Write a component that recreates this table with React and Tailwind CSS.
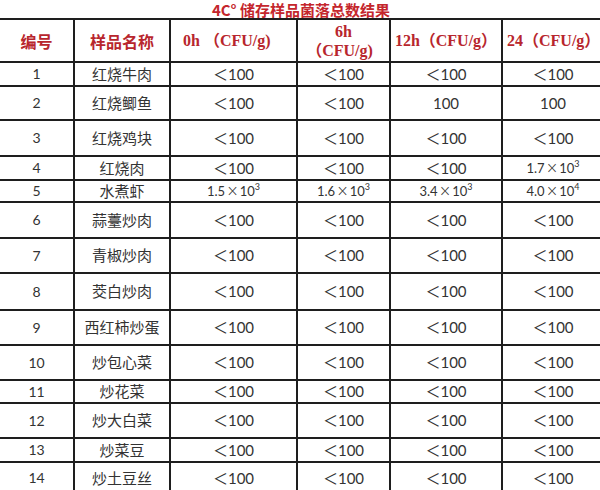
import React from "react";

const rows = [
  ["1", "红烧牛肉", ["＜100"], ["＜100"], ["＜100"], ["＜100"]],
  ["2", "红烧鲫鱼", ["＜100"], ["＜100"], ["100"], ["100"]],
  ["3", "红烧鸡块", ["＜100"], ["＜100"], ["＜100"], ["＜100"]],
  ["4", "红烧肉", ["＜100"], ["＜100"], ["＜100"], ["1.7", "3"]],
  ["5", "水煮虾", ["1.5", "3"], ["1.6", "3"], ["3.4", "3"], ["4.0", "4"]],
  ["6", "蒜薹炒肉", ["＜100"], ["＜100"], ["＜100"], ["＜100"]],
  ["7", "青椒炒肉", ["＜100"], ["＜100"], ["＜100"], ["＜100"]],
  ["8", "茭白炒肉", ["＜100"], ["＜100"], ["＜100"], ["＜100"]],
  ["9", "西红柿炒蛋", ["＜100"], ["＜100"], ["＜100"], ["＜100"]],
  ["10", "炒包心菜", ["＜100"], ["＜100"], ["＜100"], ["＜100"]],
  ["11", "炒花菜", ["＜100"], ["＜100"], ["＜100"], ["＜100"]],
  ["12", "炒大白菜", ["＜100"], ["＜100"], ["＜100"], ["＜100"]],
  ["13", "炒菜豆", ["＜100"], ["＜100"], ["＜100"], ["＜100"]],
  ["14", "炒土豆丝", ["＜100"], ["＜100"], ["＜100"], ["＜100"]],
];

const NUM = "font-['Lato','Open_Sans','Noto_Sans_CJK_SC',sans-serif]";
const CJK = "font-['Noto_Sans_CJK_SC',sans-serif]";
const HEAD = "font-['Liberation_Serif','Noto_Sans_CJK_SC',serif] text-[16px] font-bold text-[#b8262d]";

function Val({ v }) {
  if (v.length === 2) {
    return (
      <span className={"text-[13px] text-[#333] " + NUM}>
        {v[0]}
        <span className="font-['DejaVu_Sans',sans-serif] text-[15px] font-light leading-none px-[1px]">×</span>10
        <sup className="text-[9px] relative -top-[6px]">{v[1]}</sup>
      </span>
    );
  }
  return <span className={"text-[15px] text-[#333] " + NUM}>{v[0]}</span>;
}

function Cell({ children, className = "" }) {
  return (
    <div className={"bg-white flex items-center justify-center text-center leading-tight " + className}>
      {children}
    </div>
  );
}

export default function App() {
  return (
    <div className="w-[600px] h-[490px] overflow-hidden bg-white">
      <div
        className={
          "h-[18px] pt-[1px] flex items-center justify-center text-[15px] font-bold text-[#c4262c] leading-[17px] pl-[2px] " +
          CJK
        }
      >
        4C° 储存样品菌落总数结果
      </div>
      <div className="w-[613px] bg-[#1e1e1e] pt-[2px] grid gap-[2px] grid-cols-[73px_94px_125px_91px_110px_112px] grid-rows-[41px_22px_32px_34px_22px_20px_34px_33px_35px_33px_33px_21px_33px_22px_30px]">
        <Cell>
          <span className={"text-[16px] font-bold text-[#b8262d] " + CJK}>编号</span>
        </Cell>
        <Cell>
          <span className={"text-[16px] font-bold text-[#b8262d] " + CJK}>样品名称</span>
        </Cell>
        <Cell className="justify-start pl-[12px]">
          <span className={HEAD}>0h （CFU/g)</span>
        </Cell>
        <Cell className="flex-col">
          <span className={HEAD + " leading-[19px]"}>6h</span>
          <span className={HEAD + " leading-[19px] pr-[8px]"}>（CFU/g)</span>
        </Cell>
        <Cell>
          <span className={HEAD}>12h（CFU/g）</span>
        </Cell>
        <Cell className="justify-start pl-[4px]">
          <span className={HEAD}>24（CFU/g）</span>
        </Cell>
        {rows.map((r) => (
          <React.Fragment key={r[0]}>
            <Cell>
              <span className={"text-[14px] text-[#333] " + NUM}>{r[0]}</span>
            </Cell>
            <Cell>
              <span className={"text-[15px] text-[#333] " + CJK}>{r[1]}</span>
            </Cell>
            <Cell>
              <Val v={r[2]} />
            </Cell>
            <Cell>
              <Val v={r[3]} />
            </Cell>
            <Cell>
              <Val v={r[4]} />
            </Cell>
            <Cell className="pr-[12px]">
              <Val v={r[5]} />
            </Cell>
          </React.Fragment>
        ))}
      </div>
    </div>
  );
}
